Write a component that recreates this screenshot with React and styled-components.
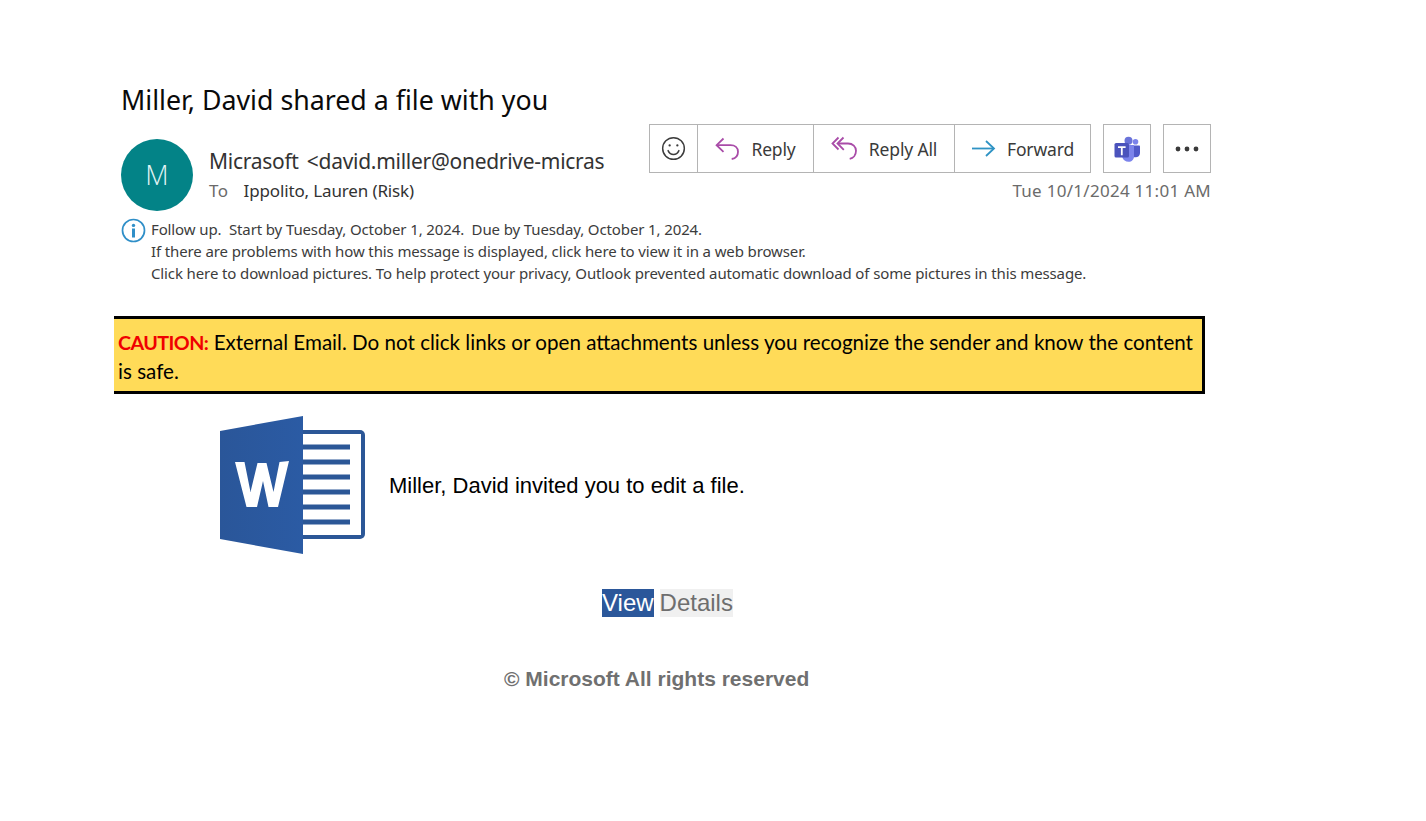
import React from "react";
import styled, { createGlobalStyle } from "styled-components";

const Global = createGlobalStyle`
  html, body { margin: 0; padding: 0; background: #fff; }
  body { font-family: "Open Sans", "Noto Sans", sans-serif; }
`;
const Page = styled.div`
  width: 1426px; height: 821px; box-sizing: border-box; overflow: hidden;
  padding: 82px 0 0 114px;
`;
const Head = styled.div`
  width: 1097px; box-sizing: border-box; padding-left: 7px;
`;
const Subject = styled.h1`
  margin: 0; font: 400 26.75px/36px "Noto Sans", sans-serif; color: #0a0a0a;
`;
const MetaRow = styled.div`
  display: flex; justify-content: space-between; margin-top: 6px; height: 87px;
`;
const Sender = styled.div`
  display: flex; gap: 16px; padding-top: 15px; width: 484px;
`;
const Avatar = styled.div`
  width: 72px; height: 72px; border-radius: 50%; background: #038387; color: #e2f4f4;
  display: flex; align-items: center; justify-content: center; flex: none;
  box-sizing: border-box; padding-bottom: 2px;
  font: 300 27px "Open Sans", sans-serif;
`;
const Who = styled.div`
  min-width: 0; flex: 1; padding-top: 7px;
`;
const From = styled.div`
  font: 400 21px/30px "Noto Sans", sans-serif; color: #333; white-space: nowrap; overflow: hidden;
  letter-spacing: -0.28px; word-spacing: 3px;
`;
const ToLine = styled.div`
  display: flex; gap: 15px; font: 400 17px/24px "Noto Sans", sans-serif; color: #333; letter-spacing: -0.14px; margin-top: 3px;
`;
const ToLabel = styled.span` color: #6a6a6a; letter-spacing: 0.5px; `;
const Side = styled.div`
  display: flex; flex-direction: column; align-items: flex-end;
`;
const Toolbar = styled.div` display: flex; gap: 12px; `;
const Group = styled.div`
  display: flex; height: 49px; box-sizing: border-box; border: 1px solid #b4b4b4; background: #fff;
`;
const Action = styled.div`
  display: flex; align-items: center; justify-content: center; gap: 11px; box-sizing: border-box;
  width: ${p => p.$w}px; height: 100%; font: 400 17.5px "Noto Sans", sans-serif; color: #3a3a3a; letter-spacing: -0.15px;
  & + & { border-left: 1px solid #b4b4b4; }
`;
const Stamp = styled.div`
  margin-top: 6px; font: 400 17px/24px "Noto Sans", sans-serif; color: #6b6b6b; letter-spacing: 0.28px;
`;
const Notes = styled.div`
  display: flex; gap: 5px; margin-top: 7px;
`;
const NoteLines = styled.div`
  font: 400 15px/22px "Noto Sans", sans-serif; color: #3c3c3c; letter-spacing: -0.12px; white-space: pre;
`;
const Banner = styled.div`
  width: 1091px; height: 78px; box-sizing: border-box; margin-top: 32px;
  border: 3px solid #000; border-left: none; background: #ffdb58; padding: 9px 4px 0 4px;
  font: 400 20.6px/28px Lato, "Open Sans", sans-serif; color: #000;
`;
const Caution = styled.strong` color: #f00000; font-weight: 700; font-size: 19.7px; letter-spacing: -0.55px; `;
const Invite = styled.div`
  display: flex; align-items: center; gap: 23px; margin: 21px 0 0 106px; height: 140px;
  font: 400 22px "Liberation Sans", Arial, sans-serif; color: #000;
`;
const InviteText = styled.span` padding-top: 2px; `;
const Buttons = styled.div`
  display: flex; gap: 6px; margin: 34px 0 0 488px; font: 400 24px/28px "Liberation Sans", Arial, sans-serif;
`;
const View = styled.span` background: #2b579a; color: #fff; `;
const Details = styled.span` background: #f0f0f0; color: #6e6e6e; `;
const Copy = styled.div`
  margin: 48px 0 0 390px; font: 700 21px/28px "Liberation Sans", Arial, sans-serif; color: #707070;
`;

const Smile = () => (
  <svg width="25" height="25" viewBox="0 0 24 24" fill="none" stroke="#3c3c3c" strokeWidth="1.4" strokeLinecap="round">
    <circle cx="12" cy="12" r="10.4" />
    <path d="M6.8 14c1.2 2.6 3 3.8 5.2 3.8s4-1.2 5.2-3.8" />
    <circle cx="8.3" cy="9" r="1.1" fill="#3c3c3c" stroke="none" />
    <circle cx="15.7" cy="9" r="1.1" fill="#3c3c3c" stroke="none" />
  </svg>
);
const ReplyIcon = () => (
  <svg width="25" height="25" viewBox="0 0 25 25" fill="none" stroke="#a94ca8" strokeWidth="1.8">
    <path d="M8.5 2.5 1.6 9.2l6.9 6.6" />
    <path d="M2 9.2h13.500c4.500 0 7.500 2.700 7.500 6.600s-2.500 6.700-6.300 7.200" />
  </svg>
);
const ReplyAllIcon = () => (
  <svg width="27" height="25" viewBox="0 0 27 25" fill="none" stroke="#a94ca8" strokeWidth="1.8">
    <path d="M7.500 1.500 1.500 7.500l6 6" />
    <path d="M12.500 1.500 6.500 7.500l6.300 6.400" />
    <path d="M7 7.500h10c4.800 0 8 3.200 8 7.300s-2.700 7.300-6.300 8" />
  </svg>
);
const ForwardIcon = () => (
  <svg width="25" height="20" viewBox="0 0 25 20" fill="none" stroke="#2f93c4" strokeWidth="1.8">
    <path d="M1 9.500h22" />
    <path d="M15 2l8 7.500-8 7.500" />
  </svg>
);
const TeamsIcon = () => (
  <svg width="26" height="26" viewBox="0 0 26 26">
    <circle cx="21.500" cy="5.800" r="2.800" fill="#7b83eb" />
    <circle cx="14.500" cy="4.800" r="4" fill="#6a73d9" />
    <path d="M18.500 9.500h6.700c.5 0 .8.3.8.8v6.600c0 2.600-2 4.300-4.300 4.300h-3.200z" fill="#5059c9" />
    <path d="M8 9h12v11.500c0 3-2.400 5.300-5.500 5.300-3 0-5.300-1.800-6.200-4.600z" fill="#7b83eb" />
    <rect x="0.500" y="7" width="14.500" height="14.500" rx="1.600" fill="#4b53bc" />
    <path d="M4 10.300h7.600v1.700H8.700v7.200H6.900V12H4z" fill="#fff" />
  </svg>
);
const Dots = () => (
  <svg width="24" height="6" viewBox="0 0 24 6" fill="#3a3a3a">
    <circle cx="3" cy="3" r="2.400" /><circle cx="12" cy="3" r="2.400" /><circle cx="21" cy="3" r="2.400" />
  </svg>
);
const Info = () => (
  <svg width="25" height="25" viewBox="0 0 25 25" style={{ flex: "none" }}>
    <circle cx="12.500" cy="12.500" r="11" fill="#fff" stroke="#2f8fc8" strokeWidth="1.700" />
    <circle cx="12.500" cy="7.400" r="1.700" fill="#2f8fc8" />
    <rect x="11" y="10.500" width="3" height="9" fill="#2f8fc8" />
  </svg>
);
const WordLogo = () => (
  <svg width="146" height="138" viewBox="0 0 146 138">
    <defs>
      <linearGradient id="wg" x1="0" x2="1" y1="0" y2="0">
        <stop offset="0" stopColor="#2a5699" />
        <stop offset="1" stopColor="#2b5ba4" />
      </linearGradient>
    </defs>
    <path d="M80 14h60a5 5 0 0 1 5 5v99a5 5 0 0 1-5 5H80z" fill="#2b5797" />
    <rect x="82" y="18" width="59" height="101" fill="#fff" />
    {[28.500, 43.500, 58.500, 73.500, 88.500, 103.500].map(y => (
      <rect key={y} x="82" y={y} width="48" height="5" fill="#2b5797" />
    ))}
    <path d="M83 0v138L0 123V15z" fill="url(#wg)" />
    <path d="M15 46h9.500l6 30 7-29h9l7 29 6-30 9.500-1-11 46H48.500L43 65l-6 26H26.500z" fill="#fff" />
  </svg>
);

export default function App() {
  return (
    <Page>
      <Global />
      <Head>
        <Subject>Miller, David shared a file with you</Subject>
        <MetaRow>
          <Sender>
            <Avatar>M</Avatar>
            <Who>
              <From>Micrasoft &lt;david.miller@onedrive-micrasoft.com&gt;</From>
              <ToLine><ToLabel>To</ToLabel><span>Ippolito, Lauren (Risk)</span></ToLine>
            </Who>
          </Sender>
          <Side>
            <Toolbar>
              <Group>
                <Action $w={47}><Smile /></Action>
                <Action $w={116}><ReplyIcon />Reply</Action>
                <Action $w={141}><ReplyAllIcon />Reply All</Action>
                <Action $w={136}><ForwardIcon />Forward</Action>
              </Group>
              <Group><Action $w={46}><TeamsIcon /></Action></Group>
              <Group><Action $w={46}><Dots /></Action></Group>
            </Toolbar>
            <Stamp>Tue 10/1/2024 11:01 AM</Stamp>
          </Side>
        </MetaRow>
        <Notes>
          <Info />
          <NoteLines>
            {"Follow up.  Start by Tuesday, October 1, 2024.  Due by Tuesday, October 1, 2024.\nIf there are problems with how this message is displayed, click here to view it in a web browser.\nClick here to download pictures. To help protect your privacy, Outlook prevented automatic download of some pictures in this message."}
          </NoteLines>
        </Notes>
      </Head>
      <Banner>
        <Caution>CAUTION:</Caution> External Email. Do not click links or open attachments unless you recognize the sender and know the content is safe.
      </Banner>
      <Invite>
        <WordLogo />
        <InviteText>Miller, David invited you to edit a file.</InviteText>
      </Invite>
      <Buttons>
        <View>View</View>
        <Details>Details</Details>
      </Buttons>
      <Copy>© Microsoft All rights reserved</Copy>
    </Page>
  );
}
